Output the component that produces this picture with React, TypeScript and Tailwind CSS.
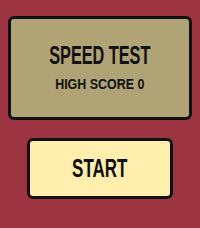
export default function App() {
  return (
    <div className="w-[200px] h-[228px] bg-[#9c3442] flex flex-col items-center pt-4 font-['Liberation_Sans',Arial,sans-serif] font-bold text-[#111]">
      <div className="w-[184px] h-[104px] bg-[#b0a376] border-[3px] border-[#111] rounded-[6px] flex flex-col items-center pt-6">
        <div className="text-[25px] leading-none scale-x-[0.65] whitespace-nowrap">SPEED TEST</div>
        <div className="text-[15px] leading-none mt-2 scale-x-[0.83] whitespace-nowrap">HIGH SCORE 0</div>
      </div>
      <button className="mt-[18px] w-[146px] h-[61px] bg-[#ffeeae] border-[3px] border-[#111] rounded-[6px] text-[25px] leading-none">
        <span className="inline-block scale-x-[0.68]">START</span>
      </button>
    </div>
  );
}
